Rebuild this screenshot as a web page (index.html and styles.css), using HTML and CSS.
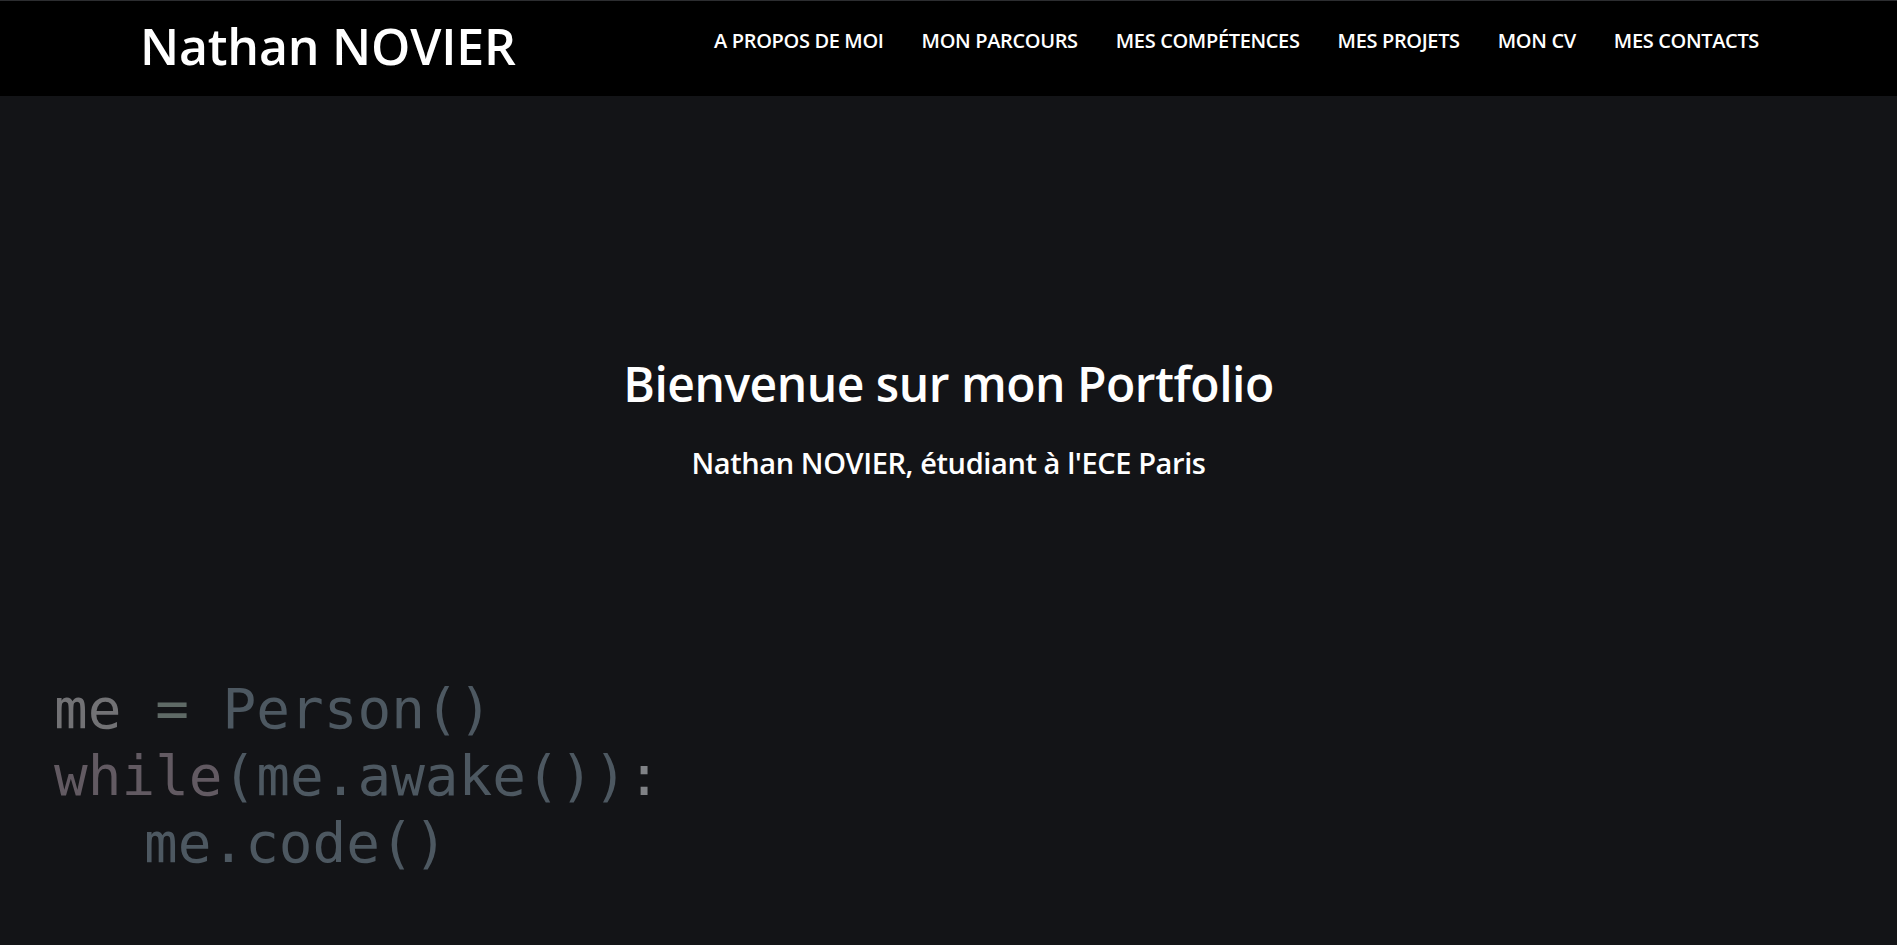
FILE: index.html
```html
<!DOCTYPE html>
<html lang="fr">
<head>
<meta charset="utf-8">
<title>Nathan NOVIER - Portfolio</title>
<link rel="stylesheet" href="styles.css">
</head>
<body>
<header class="site-header">
  <a class="logo" href="#">Nathan NOVIER</a>
  <nav class="main-nav">
    <a href="#">A PROPOS DE MOI</a>
    <a href="#">MON PARCOURS</a>
    <a href="#">MES COMPÉTENCES</a>
    <a href="#">MES PROJETS</a>
    <a href="#">MON CV</a>
    <a href="#">MES CONTACTS</a>
  </nav>
</header>
<main class="hero">
  <div class="intro">
    <h1 class="hero-title">Bienvenue sur mon Portfolio</h1>
    <p class="hero-sub">Nathan NOVIER, étudiant à l'ECE Paris</p>
  </div>
  <pre class="code"><span class="c-var">me</span> <span class="c-op">=</span> <span class="c-fn">Person()</span>
<span class="c-kw">while</span><span class="c-fn">(me.awake())</span><span class="c-op2">:</span>
<span class="c-indent"><span class="c-fn">me.code()</span></span></pre>
</main>
</body>
</html>
```

FILE: styles.css
```css
* { box-sizing: border-box; }
html, body {
  margin: 0;
  padding: 0;
  height: 100%;
}
body {
  background: #131417;
  font-family: "Open Sans", "Noto Sans", sans-serif;
  color: #fff;
  overflow: hidden;
}
.site-header {
  height: 96px;
  background: #000;
  border-top: 1px solid #2c2d30;
  display: flex;
  align-items: flex-start;
  justify-content: space-between;
  padding: 0 138px 0 140px;
}
.logo {
  color: #fff;
  text-decoration: none;
  font-size: 50px;
  font-weight: 600;
  line-height: 1;
  margin-top: 20px;
  letter-spacing: -0.2px;
}
.main-nav {
  display: flex;
  gap: 38px;
  margin-top: 30px;
}
.main-nav a {
  color: #fff;
  text-decoration: none;
  font-size: 20px;
  font-weight: 600;
  line-height: 1;
  letter-spacing: -0.35px;
}
.hero {
  height: calc(100% - 96px);
  display: flex;
  flex-direction: column;
}
.intro {
  text-align: center;
  padding-top: 259px;
}
.hero-title {
  margin: 0;
  font-size: 48px;
  font-weight: 600;
  line-height: 1.2;
  letter-spacing: -0.5px;
}
.hero-sub {
  margin: 33px 0 0;
  font-size: 29px;
  font-weight: 600;
  line-height: 1.2;
  letter-spacing: -0.4px;
}
.code {
  margin: 195px 0 0 54px;
  font-family: "DejaVu Sans Mono", "Liberation Mono", monospace;
  font-size: 56px;
  line-height: 67px;
  color: #56626b;
}
.c-var { color: #727275; }
.c-op { color: #5f6a66; }
.c-fn { color: #4d5861; }
.c-kw { color: #625a62; }
.c-op2 { color: #808286; }
.c-indent { padding-left: 90px; }
```
